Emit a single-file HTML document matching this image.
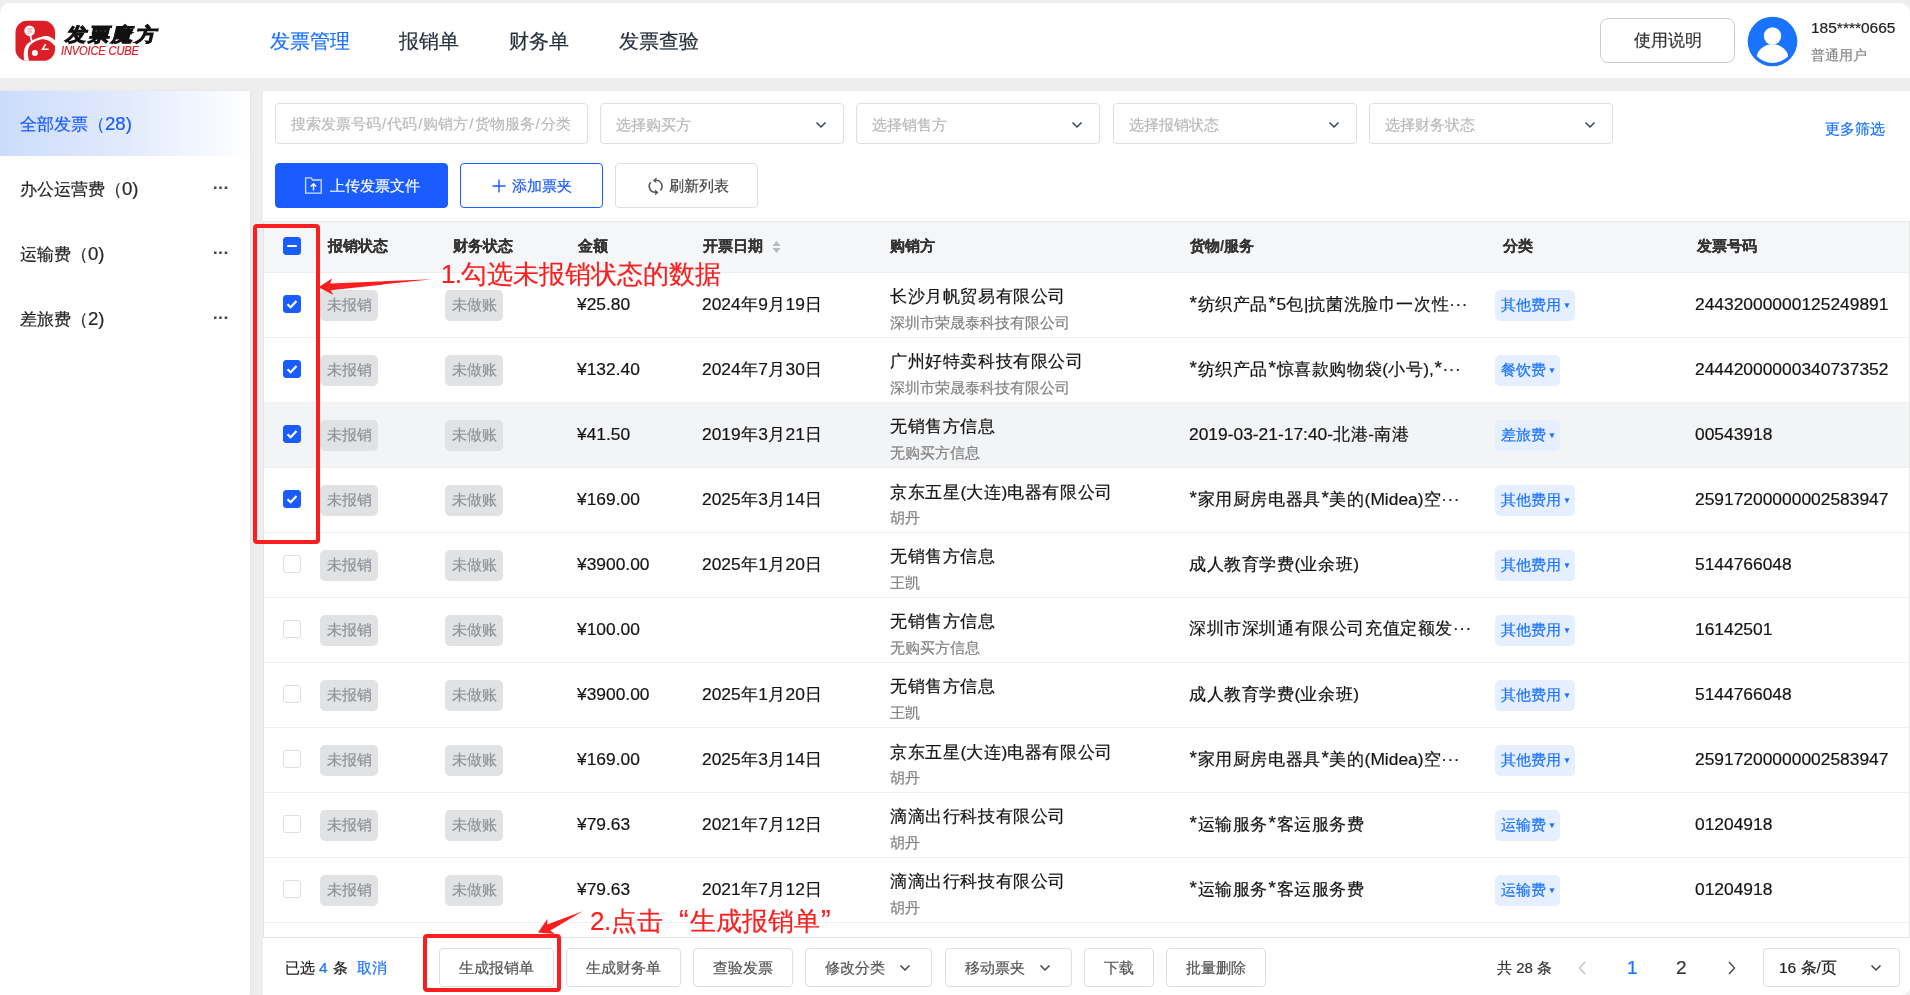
<!DOCTYPE html>
<html><head><meta charset="utf-8"><style>
*{box-sizing:border-box;margin:0;padding:0}
html,body{width:1910px;height:995px;overflow:hidden}
body{background:#eeeeee;font-family:"Liberation Sans",sans-serif;color:#222;position:relative;-webkit-text-stroke-width:0.2px}
.a{position:absolute;white-space:nowrap}
#hdr{will-change:transform;position:absolute;left:0;top:3px;width:1910px;height:75px;background:#fff;border-radius:10px 10px 0 0}
#side{will-change:transform;position:absolute;left:0;top:91px;width:250px;height:904px;background:#fff;box-shadow:1px 0 3px rgba(0,0,0,0.05)}
#main{will-change:transform;position:absolute;left:263px;top:91px;width:1647px;height:904px;background:#fff;border-radius:0 0 8px 0;overflow:hidden}
.nav{position:absolute;font-size:19.6px;color:#26303c;top:24px;line-height:28px;white-space:nowrap}
.si{position:absolute;left:0;width:250px;height:65px;font-size:17.4px;line-height:65px;padding-left:20px;color:#262626;white-space:nowrap}
.si .dots{position:absolute;left:213px;top:-1px;color:#444;font-size:16px;font-weight:bold;letter-spacing:0px}
.inp{position:absolute;top:12px;height:41px;border:1px solid #dedede;border-radius:4px;font-size:15px;color:#bababa;line-height:40px;padding-left:15px;white-space:nowrap}
.sl{font-style:normal;margin:0 1px}
.chev{position:absolute;right:16px;top:16px;width:12px;height:10px}
.btn{position:absolute;top:72px;height:45px;border:1px solid #dedede;border-radius:4px;font-size:15.2px;line-height:43px;color:#444;white-space:nowrap}
.th{position:absolute;top:-2px;height:51px;line-height:51px;font-size:15px;font-weight:bold;color:#333;white-space:nowrap;-webkit-text-stroke-width:0.15px}
.row{position:absolute;left:0;width:1646px;height:65px;border-bottom:1px solid #efefef;background:#fff}
.row.hov{background:#f3f4f6}
.cb{position:absolute;left:20px;top:22px;width:18px;height:18px;border:1px solid #dedede;border-radius:3px;background:#fff}
.cb.on{background:#1a5cff;border-color:#1a5cff}
.tag{position:absolute;top:16.5px;height:31px;line-height:29.5px;border-radius:5px;background:#e1e2e4;color:#909399;font-size:15px;text-align:center;width:58px;white-space:nowrap}
.c{position:absolute;font-size:17px;letter-spacing:0.6px;color:#141414;line-height:22px;white-space:nowrap}
.c .n{font-size:17.4px;letter-spacing:0}
.ast{font-size:19px;position:relative;top:-1.5px;margin:0 0.6px}
.ell{letter-spacing:0px;position:relative;left:1px}
.amt{left:314px;top:20px}
.dt{left:439px;top:20px}
.co1{left:627px;top:13.3px}
.co2{left:627px;top:41px;font-size:15px;letter-spacing:0;color:#828282;line-height:18px}
.gd{left:926px;top:20px}
.cat{position:absolute;left:1232px;top:16.5px;height:31px;line-height:29.5px;padding:0 4px 0 6px;border-radius:5px;background:#e6efff;color:#1a73ff;font-size:15px;white-space:nowrap}
.cat i{font-style:normal;font-size:8px;position:relative;top:-2px;margin-left:2px}
.no{left:1432px;top:20px}
.fb{position:absolute;top:857px;height:39px;border:1px solid #dedede;border-radius:4px;font-size:15px;line-height:37px;color:#555;white-space:nowrap}
</style></head><body>
<div id="hdr">
<svg class="a" style="left:12px;top:15px" width="48" height="48" viewBox="12 18 48 48">
<defs><clipPath id="lg"><rect x="15.5" y="20.8" width="39.5" height="40" rx="11.5"/></clipPath></defs>
<rect x="15.5" y="20.8" width="39.5" height="40" rx="11.5" fill="#dc1e26"/>
<g clip-path="url(#lg)">
<path d="M24.3 62 C23.3 55 23.3 48.5 26.8 44.6 C30 41.3 37 37.5 44.4 36 C49 35.3 53.5 38 56.5 42 L56.5 48.5 C53.5 43.5 50 40.3 44.5 39.4 C40 38.8 34 41.5 30.6 44.8 C27.4 48.3 26.8 54 29.6 62 Z" fill="#fff"/>
</g>
<circle cx="29.6" cy="30.7" r="5.3" fill="#fff"/>
<text x="29.6" y="33" font-size="6.2" text-anchor="middle" fill="#e88" font-family="Liberation Sans">票</text>
<path d="M30.3 35.5 L31.8 41" stroke="#fff" stroke-width="1.8"/>
<circle cx="34.9" cy="52.9" r="3" fill="#fff"/>
<path d="M45.6 44.2 L42.6 49.3 L48.6 49.3" fill="none" stroke="#fff" stroke-width="1.6"/>
</svg>
<div class="a" style="left:63px;top:19px;font-size:19px;font-weight:900;color:#111;letter-spacing:2.2px;line-height:26px;transform-origin:0 100%;transform:scaleX(1.1) skewX(-12deg);-webkit-text-stroke:1px #111">发票魔方</div>
<div class="a" style="left:61px;top:41.5px;font-size:12.4px;font-style:italic;color:#dc1e26;line-height:13px;letter-spacing:-0.2px;transform-origin:0 0;transform:scaleX(0.9)">INVOICE CUBE</div>
<div class="nav" style="left:270px;color:#1a73ff">发票管理</div>
<div class="nav" style="left:399px">报销单</div>
<div class="nav" style="left:509px">财务单</div>
<div class="nav" style="left:619px">发票查验</div>
<div class="a" style="left:1600px;top:15px;width:135px;height:45px;border:1px solid #cccccc;border-radius:8px;font-size:17.2px;line-height:43px;text-align:center;color:#333">使用说明</div>
<svg class="a" style="left:1747.2px;top:12.5px" width="51" height="51" viewBox="0 0 51 51">
<circle cx="25.5" cy="25.5" r="24.8" fill="#1a73ff"/>
<circle cx="25.5" cy="20" r="8.7" fill="#fff"/>
<clipPath id="cc"><circle cx="25.5" cy="25.5" r="21.4"/></clipPath>
<ellipse cx="25.5" cy="42.8" rx="16" ry="14.5" fill="#fff" clip-path="url(#cc)"/>
</svg>
<div class="a" style="left:1811px;top:14px;font-size:15.5px;line-height:22px;color:#222">185****0665</div>
<div class="a" style="left:1811px;top:41px;font-size:14.4px;line-height:22px;color:#888">普通用户</div>
</div>
<div id="side">
<div class="si" style="top:0;background:linear-gradient(90deg,#cbdcfb 0%,#e4ecfd 55%,#ffffff 100%);color:#1a5cff">全部发票（<span style="font-size:18.6px">28)</span></div>
<div class="si" style="top:65px">办公运营费（<span style="font-size:18.6px">0)</span><span class="dots">···</span></div>
<div class="si" style="top:130px">运输费（<span style="font-size:18.6px">0)</span><span class="dots">···</span></div>
<div class="si" style="top:195px">差旅费（<span style="font-size:18.6px">2)</span><span class="dots">···</span></div>
</div>
<div id="main">
<div class="inp" style="left:12px;width:312.5px">搜索发票号码<i class="sl">/</i>代码<i class="sl">/</i>购销方<i class="sl">/</i>货物服务<i class="sl">/</i>分类</div>
<div class="inp" style="left:337px;width:243.5px;line-height:42.5px">选择购买方<svg class="chev" viewBox="0 0 12 10"><path d="M1.5 2.5 L6 7 L10.5 2.5" fill="none" stroke="#3a4350" stroke-width="1.5"/></svg></div>
<div class="inp" style="left:593px;width:243.5px;line-height:42.5px">选择销售方<svg class="chev" viewBox="0 0 12 10"><path d="M1.5 2.5 L6 7 L10.5 2.5" fill="none" stroke="#3a4350" stroke-width="1.5"/></svg></div>
<div class="inp" style="left:850px;width:243.5px;line-height:42.5px">选择报销状态<svg class="chev" viewBox="0 0 12 10"><path d="M1.5 2.5 L6 7 L10.5 2.5" fill="none" stroke="#3a4350" stroke-width="1.5"/></svg></div>
<div class="inp" style="left:1106px;width:243.5px;line-height:42.5px">选择财务状态<svg class="chev" viewBox="0 0 12 10"><path d="M1.5 2.5 L6 7 L10.5 2.5" fill="none" stroke="#3a4350" stroke-width="1.5"/></svg></div>
<div class="a" style="left:1562px;top:27.5px;font-size:15px;line-height:20px;color:#1a73ff">更多筛选</div>
<div class="btn" style="left:12px;width:173px;background:#1a5cff;border-color:#1a5cff;color:#fff;padding-left:54px">上传发票文件<svg class="a" style="left:0;top:0" width="60" height="45" viewBox="1 1 60 45"><path d="M30.6 14.8 H36.2 L37.7 17 H46.2 V30.2 H30.6 Z" fill="none" stroke="#fff" stroke-width="1.3" opacity="0.8"/><path d="M38.5 27.5 V20.8 M35.8 23.4 L38.5 20.7 L41.2 23.4" fill="none" stroke="#fff" stroke-width="1.4"/></svg></div>
<div class="btn" style="left:197px;width:143px;border-color:#1a5cff;color:#1a5cff;padding-left:51px">添加票夹<svg class="a" style="left:31px;top:15px" width="14" height="14" viewBox="0 0 14 14"><path d="M7 0.5 V13.5 M0.5 7 H13.5" stroke="#1a5cff" stroke-width="1.4"/></svg></div>
<div class="btn" style="left:352px;width:143px;color:#444;padding-left:53px">刷新列表<svg class="a" style="left:29px;top:11px" width="22" height="22" viewBox="0 0 22 22"><path d="M11.2 5.3 A6 6 0 0 1 15.3 15.5" fill="none" stroke="#555a60" stroke-width="1.6"/><path d="M7.8 5.4 L11.6 2.2 L11.2 8 Z" fill="#555a60"/><path d="M5.8 7.3 A6 6 0 0 0 10.6 17.3" fill="none" stroke="#555a60" stroke-width="1.6"/><path d="M13.6 17.5 L10 14.5 L10.2 20.2 Z" fill="#555a60"/></svg></div>
<div class="a" style="left:0;top:130px;width:1647px;height:717px;border-top:1px solid #e8e8e8;border-right:1px solid #e6e6e6;border-bottom:1px solid #e2e2e2;overflow:hidden">
<div class="a" style="left:0;top:0;width:1646px;height:51px;background:#f5f6f8;border-bottom:1px solid #ededed">
<div class="cb on" style="top:14.5px"><div style="position:absolute;left:3px;top:7px;width:10px;height:2.4px;background:#fff;border-radius:1px"></div></div>
<div class="th" style="left:65px">报销状态</div>
<div class="th" style="left:190px">财务状态</div>
<div class="th" style="left:315px">金额</div>
<div class="th" style="left:440px">开票日期</div>
<div class="th" style="left:627px">购销方</div>
<div class="th" style="left:927px">货物/服务</div>
<div class="th" style="left:1240px">分类</div>
<div class="th" style="left:1434px">发票号码</div>
<svg class="a" style="left:508.5px;top:18px" width="9" height="14" viewBox="0 0 9 14"><path d="M4.5 1 L8.6 6 H0.4Z M0.4 8 H8.6 L4.5 13Z" fill="#b6b9bf"/></svg>
</div>
<div class="row" style="top:51px">
<div class="cb on"><svg width="16" height="16" viewBox="0 0 16 16" style="position:absolute;left:0;top:0"><path d="M3.5 8.2 L6.6 11.2 L12.5 5" fill="none" stroke="#fff" stroke-width="2.2"/></svg></div>
<div class="tag" style="left:57px">未报销</div><div class="tag" style="left:182px">未做账</div>
<div class="c amt"><span class="n">¥25.80</span></div>
<div class="c dt"><span class="n">2024</span>年<span class="n">9</span>月<span class="n">19</span>日</div>
<div class="c co1">长沙月帆贸易有限公司</div><div class="c co2">深圳市荣晟泰科技有限公司</div>
<div class="c gd"><span class="n"><span class="ast">*</span></span>纺织产品<span class="n"><span class="ast">*</span>5</span>包<span class="n">|</span>抗菌洗脸巾一次性···</div>
<div class="cat">其他费用<i>▼</i></div>
<div class="c no"><span class="n">24432000000125249891</span></div>
</div>
<div class="row" style="top:116px">
<div class="cb on"><svg width="16" height="16" viewBox="0 0 16 16" style="position:absolute;left:0;top:0"><path d="M3.5 8.2 L6.6 11.2 L12.5 5" fill="none" stroke="#fff" stroke-width="2.2"/></svg></div>
<div class="tag" style="left:57px">未报销</div><div class="tag" style="left:182px">未做账</div>
<div class="c amt"><span class="n">¥132.40</span></div>
<div class="c dt"><span class="n">2024</span>年<span class="n">7</span>月<span class="n">30</span>日</div>
<div class="c co1">广州好特卖科技有限公司</div><div class="c co2">深圳市荣晟泰科技有限公司</div>
<div class="c gd"><span class="n"><span class="ast">*</span></span>纺织产品<span class="n"><span class="ast">*</span></span>惊喜款购物袋<span class="n">(</span>小号<span class="n">),<span class="ast">*</span></span>···</div>
<div class="cat">餐饮费<i>▼</i></div>
<div class="c no"><span class="n">24442000000340737352</span></div>
</div>
<div class="row hov" style="top:181px">
<div class="cb on"><svg width="16" height="16" viewBox="0 0 16 16" style="position:absolute;left:0;top:0"><path d="M3.5 8.2 L6.6 11.2 L12.5 5" fill="none" stroke="#fff" stroke-width="2.2"/></svg></div>
<div class="tag" style="left:57px">未报销</div><div class="tag" style="left:182px">未做账</div>
<div class="c amt"><span class="n">¥41.50</span></div>
<div class="c dt"><span class="n">2019</span>年<span class="n">3</span>月<span class="n">21</span>日</div>
<div class="c co1">无销售方信息</div><div class="c co2">无购买方信息</div>
<div class="c gd"><span class="n">2019-03-21-17:40-</span>北港<span class="n">-</span>南港</div>
<div class="cat">差旅费<i>▼</i></div>
<div class="c no"><span class="n">00543918</span></div>
</div>
<div class="row" style="top:246px">
<div class="cb on"><svg width="16" height="16" viewBox="0 0 16 16" style="position:absolute;left:0;top:0"><path d="M3.5 8.2 L6.6 11.2 L12.5 5" fill="none" stroke="#fff" stroke-width="2.2"/></svg></div>
<div class="tag" style="left:57px">未报销</div><div class="tag" style="left:182px">未做账</div>
<div class="c amt"><span class="n">¥169.00</span></div>
<div class="c dt"><span class="n">2025</span>年<span class="n">3</span>月<span class="n">14</span>日</div>
<div class="c co1">京东五星<span class="n">(</span>大连<span class="n">)</span>电器有限公司</div><div class="c co2">胡丹</div>
<div class="c gd"><span class="n"><span class="ast">*</span></span>家用厨房电器具<span class="n"><span class="ast">*</span></span>美的<span class="n">(Midea)</span>空···</div>
<div class="cat">其他费用<i>▼</i></div>
<div class="c no"><span class="n">25917200000002583947</span></div>
</div>
<div class="row" style="top:311px">
<div class="cb"></div>
<div class="tag" style="left:57px">未报销</div><div class="tag" style="left:182px">未做账</div>
<div class="c amt"><span class="n">¥3900.00</span></div>
<div class="c dt"><span class="n">2025</span>年<span class="n">1</span>月<span class="n">20</span>日</div>
<div class="c co1">无销售方信息</div><div class="c co2">王凯</div>
<div class="c gd">成人教育学费<span class="n">(</span>业余班<span class="n">)</span></div>
<div class="cat">其他费用<i>▼</i></div>
<div class="c no"><span class="n">5144766048</span></div>
</div>
<div class="row" style="top:376px">
<div class="cb"></div>
<div class="tag" style="left:57px">未报销</div><div class="tag" style="left:182px">未做账</div>
<div class="c amt"><span class="n">¥100.00</span></div>
<div class="c co1">无销售方信息</div><div class="c co2">无购买方信息</div>
<div class="c gd">深圳市深圳通有限公司充值定额发···</div>
<div class="cat">其他费用<i>▼</i></div>
<div class="c no"><span class="n">16142501</span></div>
</div>
<div class="row" style="top:441px">
<div class="cb"></div>
<div class="tag" style="left:57px">未报销</div><div class="tag" style="left:182px">未做账</div>
<div class="c amt"><span class="n">¥3900.00</span></div>
<div class="c dt"><span class="n">2025</span>年<span class="n">1</span>月<span class="n">20</span>日</div>
<div class="c co1">无销售方信息</div><div class="c co2">王凯</div>
<div class="c gd">成人教育学费<span class="n">(</span>业余班<span class="n">)</span></div>
<div class="cat">其他费用<i>▼</i></div>
<div class="c no"><span class="n">5144766048</span></div>
</div>
<div class="row" style="top:506px">
<div class="cb"></div>
<div class="tag" style="left:57px">未报销</div><div class="tag" style="left:182px">未做账</div>
<div class="c amt"><span class="n">¥169.00</span></div>
<div class="c dt"><span class="n">2025</span>年<span class="n">3</span>月<span class="n">14</span>日</div>
<div class="c co1">京东五星<span class="n">(</span>大连<span class="n">)</span>电器有限公司</div><div class="c co2">胡丹</div>
<div class="c gd"><span class="n"><span class="ast">*</span></span>家用厨房电器具<span class="n"><span class="ast">*</span></span>美的<span class="n">(Midea)</span>空···</div>
<div class="cat">其他费用<i>▼</i></div>
<div class="c no"><span class="n">25917200000002583947</span></div>
</div>
<div class="row" style="top:571px">
<div class="cb"></div>
<div class="tag" style="left:57px">未报销</div><div class="tag" style="left:182px">未做账</div>
<div class="c amt"><span class="n">¥79.63</span></div>
<div class="c dt"><span class="n">2021</span>年<span class="n">7</span>月<span class="n">12</span>日</div>
<div class="c co1">滴滴出行科技有限公司</div><div class="c co2">胡丹</div>
<div class="c gd"><span class="n"><span class="ast">*</span></span>运输服务<span class="n"><span class="ast">*</span></span>客运服务费</div>
<div class="cat">运输费<i>▼</i></div>
<div class="c no"><span class="n">01204918</span></div>
</div>
<div class="row" style="top:636px">
<div class="cb"></div>
<div class="tag" style="left:57px">未报销</div><div class="tag" style="left:182px">未做账</div>
<div class="c amt"><span class="n">¥79.63</span></div>
<div class="c dt"><span class="n">2021</span>年<span class="n">7</span>月<span class="n">12</span>日</div>
<div class="c co1">滴滴出行科技有限公司</div><div class="c co2">胡丹</div>
<div class="c gd"><span class="n"><span class="ast">*</span></span>运输服务<span class="n"><span class="ast">*</span></span>客运服务费</div>
<div class="cat">运输费<i>▼</i></div>
<div class="c no"><span class="n">01204918</span></div>
</div>
</div>
<div class="a" style="left:0;top:130px;width:1px;height:717px;background:#e3e3e3"></div>
<div class="a" style="left:22px;top:866px;font-size:15px;line-height:22px;color:#222">已选</div><div class="a" style="left:56px;top:866px;font-size:15.4px;line-height:22px;color:#1a73ff">4</div><div class="a" style="left:69.5px;top:866px;font-size:15px;line-height:22px;color:#222">条</div><div class="a" style="left:93.5px;top:866px;font-size:15px;line-height:22px;color:#1a73ff">取消</div>
<div class="fb" style="left:176px;width:115px;text-align:center">生成报销单</div>
<div class="fb" style="left:303px;width:115px;text-align:center">生成财务单</div>
<div class="fb" style="left:430px;width:100px;text-align:center">查验发票</div>
<div class="fb" style="left:542px;width:127px;padding-left:19px">修改分类<svg class="a" style="left:93px;top:14px" width="12" height="10" viewBox="0 0 12 10"><path d="M1.5 2.5 L6 7 L10.5 2.5" fill="none" stroke="#3a4350" stroke-width="1.5"/></svg></div>
<div class="fb" style="left:682px;width:127px;padding-left:19px">移动票夹<svg class="a" style="left:93px;top:14px" width="12" height="10" viewBox="0 0 12 10"><path d="M1.5 2.5 L6 7 L10.5 2.5" fill="none" stroke="#3a4350" stroke-width="1.5"/></svg></div>
<div class="fb" style="left:821px;width:70px;text-align:center">下载</div>
<div class="fb" style="left:903px;width:100px;text-align:center">批量删除</div>
<div class="a" style="left:1234px;top:866px;font-size:15px;line-height:22px;color:#333">共 28 条</div>
<svg class="a" style="left:1314px;top:869px" width="10" height="16" viewBox="0 0 10 16"><path d="M8 2 L2.5 8 L8 14" fill="none" stroke="#c0c4cc" stroke-width="1.4"/></svg>
<div class="a" style="left:1364px;top:864px;font-size:19px;line-height:26px;color:#1a73ff">1</div>
<div class="a" style="left:1413px;top:864px;font-size:19px;line-height:26px;color:#333">2</div>
<svg class="a" style="left:1464px;top:869px" width="10" height="16" viewBox="0 0 10 16"><path d="M2 2 L7.5 8 L2 14" fill="none" stroke="#444" stroke-width="1.4"/></svg>
<div class="a" style="left:1500px;top:857px;width:137px;height:39px;border:1px solid #dedede;border-radius:4px;font-size:15.5px;line-height:37px;color:#222;padding-left:15px">16 条/页<svg class="a" style="left:106px;top:14px" width="12" height="10" viewBox="0 0 12 10"><path d="M1.5 2.5 L6 7 L10.5 2.5" fill="none" stroke="#3a4350" stroke-width="1.5"/></svg></div>
</div>
<div style="position:absolute;left:0;top:0;width:1910px;height:995px;will-change:transform">
<div class="a" style="left:253px;top:224px;width:67px;height:320px;border:4px solid #fa1e1e;border-radius:4px"></div>
<div class="a" style="left:423px;top:934px;width:137.5px;height:58px;border:4px solid #fa1e1e;border-radius:4px"></div>
<svg class="a" style="left:0;top:0" width="1910" height="995" viewBox="0 0 1910 995"><path d="M432.1 279.2 L330.2 283.6 L332 278.5 L318.5 287.3 L333.5 295 L330.5 290.2 Z" fill="#fa1e1e"/><path d="M582.6 911.2 L547.2 924.6 L547.5 918.8 L538 932.4 L554.6 934 L550.4 930.6 Z" fill="#fa1e1e"/></svg>
<div class="a" style="left:441px;top:256px;font-size:26px;line-height:36px;color:#fa1e1e"><span style="letter-spacing:-0.8px">1.</span>勾选未报销状态的数据</div>
<div class="a" style="left:590px;top:902px;font-size:26px;line-height:36px;color:#fa1e1e"><span style="letter-spacing:-0.4px">2.</span>点击<span style="margin-left:16px;margin-right:1.5px;font-size:29px">“</span>生成报销单<span style="margin-left:1px;font-size:29px">”</span></div>
</div>
</body></html>
